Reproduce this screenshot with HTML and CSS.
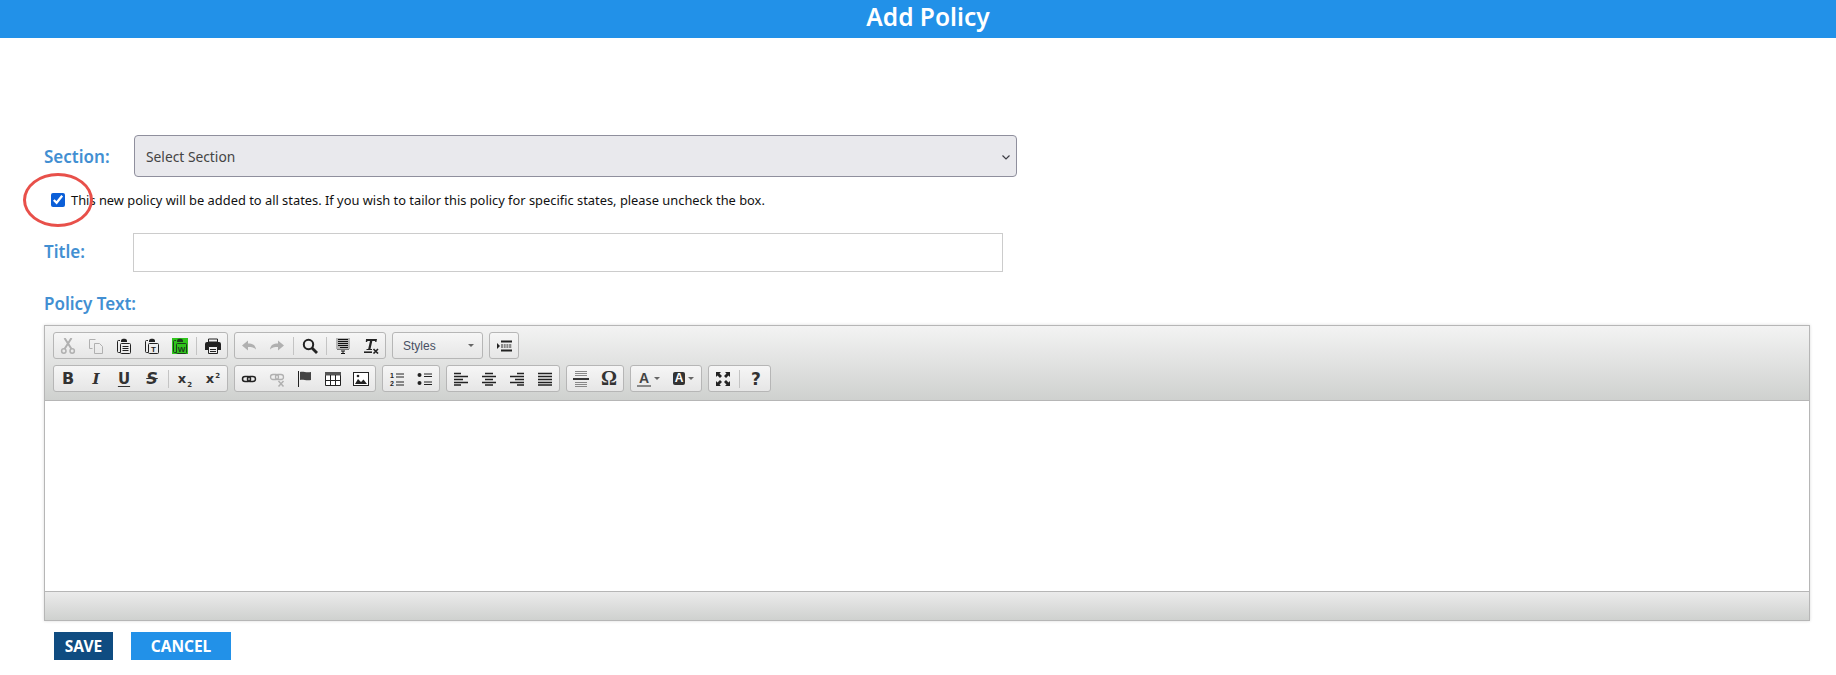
FILE: index.html
```html
<!DOCTYPE html>
<html lang="en">
<head>
<meta charset="utf-8">
<title>Add Policy</title>
<link rel="stylesheet" href="styles.css">
</head>
<body>
<svg class="defs" width="0" height="0">
  <defs>
    <symbol id="i-cut" viewBox="0 0 16 16"><path d="M4.500 0l7 11M11.500 0l-7 11" fill="none" stroke="currentColor" stroke-width="2"/><circle cx="3.800" cy="13" r="2.200" fill="none" stroke="currentColor" stroke-width="1.500"/><circle cx="12.200" cy="13" r="2.200" fill="none" stroke="currentColor" stroke-width="1.500"/></symbol>
    <symbol id="i-copy" viewBox="0 0 16 16"><path d="M7.500 1.500h-6v9h3M6.500 5.500h5l3 3v7h-8z" fill="none" stroke="currentColor"/></symbol>
    <symbol id="i-paste" viewBox="0 0 16 16"><path d="M4 2.500H2.500a1 1 0 0 0-1 1v10a1 1 0 0 0 1 1H4" fill="none" stroke="currentColor"/><path d="M5 2.500C5 .3 11 .3 11 2.500V4H5z" fill="currentColor"/><rect x="4.500" y="5.500" width="10" height="10" rx="1" fill="none" stroke="currentColor"/><path d="M6.500 8.500h6M6.500 10.500h6M6.500 12.500h6" stroke="currentColor"/></symbol>
    <symbol id="i-ptext" viewBox="0 0 16 16"><path d="M4 2.500H2.500a1 1 0 0 0-1 1v10a1 1 0 0 0 1 1H4" fill="none" stroke="currentColor"/><path d="M5 2.500C5 .3 11 .3 11 2.500V4H5z" fill="currentColor"/><rect x="4.500" y="5.500" width="10" height="10" rx="1" fill="none" stroke="currentColor"/><text x="9.500" y="13.500" text-anchor="middle" class="ico-letter">T</text></symbol>
    <symbol id="i-pword" viewBox="0 0 16 16"><path d="M4 2.500H2.500a1 1 0 0 0-1 1v10a1 1 0 0 0 1 1H4" fill="none" stroke="currentColor"/><path d="M5 2.500C5 .3 11 .3 11 2.500V4H5z" fill="currentColor"/><rect x="4.500" y="5.500" width="10" height="10" rx="1" fill="none" stroke="currentColor"/><text x="9.500" y="13.500" text-anchor="middle" class="ico-letter">W</text></symbol>
    <symbol id="i-print" viewBox="0 0 16 16"><path d="M3.500 1h9v3h-9z" fill="none" stroke="currentColor"/><path d="M2 4h12a2 2 0 0 1 2 2v6h-3V9H3v3H0V6a2 2 0 0 1 2-2z" fill="currentColor"/><path d="M3.500 8.500h9v7h-9z" fill="#eee" stroke="currentColor"/><path d="M5 11.500h6M5 13.500h6" stroke="currentColor"/></symbol>
    <symbol id="i-undo" viewBox="0 0 16 16"><path d="M1 7.500l6-5v3c4.500 0 7.500 1.500 8 6-2-2-4-2.500-8-2.500v3.500z" fill="currentColor"/></symbol>
    <symbol id="i-redo" viewBox="0 0 16 16"><path d="M15 7.500l-6-5v3c-4.500 0-7.500 1.500-8 6 2-2 4-2.500 8-2.500v3.500z" fill="currentColor"/></symbol>
    <symbol id="i-find" viewBox="0 0 16 16"><circle cx="6.500" cy="6.500" r="4.700" fill="none" stroke="currentColor" stroke-width="2"/><path d="M10 10l5 5" stroke="currentColor" stroke-width="2.800"/></symbol>
    <symbol id="i-select" viewBox="0 0 16 16"><rect x="1" y="0" width="14" height="11" fill="#b4b4b4"/><path d="M3 1.500h10M3 3.500h10M3 5.500h10M3 7.500h10M5 9.500h8" stroke="#111"/><path d="M2 11.500h12" stroke="#777"/><path d="M6 13h4M8 13v2.500M6 15.500h4" stroke="#111"/></symbol>
    <symbol id="i-remove" viewBox="0 0 16 16"><path d="M3 1h11l-.6 3h-1L12 3H9.300L7.500 11H9v1H3.500v-1h1.700L7 3H4.700l-.9 1h-1z" fill="currentColor"/><path d="M1 14.200h8" stroke="currentColor" stroke-width="1.600"/><path d="M10.500 11l4.500 4.500M15 11l-4.500 4.500" stroke="currentColor" stroke-width="1.600"/></symbol>
    <symbol id="i-indent" viewBox="0 0 16 16"><path d="M1 5l3 3-3 3z" fill="currentColor"/><path d="M5 2.500h11v2H5zM5 11.500h11v2H5z" fill="currentColor"/><path d="M5 7h11M5 9h11" stroke="currentColor" stroke-dasharray="2 .7"/></symbol>
    <symbol id="i-link" viewBox="0 0 16 16"><rect x="1.500" y="5.500" width="8" height="5" rx="2.500" fill="none" stroke="currentColor" stroke-width="1.500"/><rect x="6.500" y="5.500" width="8" height="5" rx="2.500" fill="none" stroke="currentColor" stroke-width="1.500"/></symbol>
    <symbol id="i-unlink" viewBox="0 0 16 16"><rect x="1.500" y="3.500" width="8" height="5" rx="2.500" fill="none" stroke="currentColor" stroke-width="1.300"/><rect x="6.500" y="3.500" width="8" height="5" rx="2.500" fill="none" stroke="currentColor" stroke-width="1.300"/><path d="M9.500 10l5 5.500M14.500 10l-5 5.500" stroke="currentColor" stroke-width="1.500"/></symbol>
    <symbol id="i-anchor" viewBox="0 0 16 16"><path d="M1.500 0v16" stroke="#222"/><path d="M3 1c3-1 6 1 11 0v8c-5 1-8-1-11 0z" fill="#444"/></symbol>
    <symbol id="i-table" viewBox="0 0 16 16"><path d="M.5 1.500h15v13H.5z" fill="#fff" stroke="currentColor"/><path d="M0 1h16v3.500H0z" fill="#555"/><path d="M.5 9.500h15M5.500 4v11M10.500 4v11" stroke="currentColor" fill="none"/></symbol>
    <symbol id="i-image" viewBox="0 0 16 16"><rect x=".5" y="1.500" width="15" height="13" fill="#fff" stroke="currentColor"/><path d="M2 13l3-5 3 3 2.500-2.500L14 13z" fill="currentColor"/><circle cx="5" cy="5" r="1.300" fill="currentColor"/></symbol>
    <symbol id="i-ol" viewBox="0 0 16 16"><path d="M7 3h8M7 6h8M7 11h8M7 14h8" stroke="currentColor"/><text x="1" y="7" class="ico-num">1</text><text x="1" y="15" class="ico-num">2</text></symbol>
    <symbol id="i-ul" viewBox="0 0 16 16"><circle cx="2.500" cy="4" r="2" fill="currentColor"/><circle cx="2.500" cy="12" r="2" fill="currentColor"/><path d="M7 3h8M7 5.500h8M7 11h8M7 13.500h8" stroke="currentColor"/></symbol>
    <symbol id="i-left" viewBox="0 0 16 16"><path d="M1 2.500h7M1 5.500h14M1 8.500h9M1 11.500h14M1 14h7" stroke="currentColor" stroke-width="1.400"/></symbol>
    <symbol id="i-center" viewBox="0 0 16 16"><path d="M4 2.500h8M1 5.500h14M4 8.500h8M1 11.500h14M4 14h8" stroke="currentColor" stroke-width="1.400"/></symbol>
    <symbol id="i-right" viewBox="0 0 16 16"><path d="M8 2.500h7M1 5.500h14M6 8.500h9M1 11.500h14M8 14h7" stroke="currentColor" stroke-width="1.400"/></symbol>
    <symbol id="i-justify" viewBox="0 0 16 16"><path d="M1 2.500h14M1 5.500h14M1 8.500h14M1 11.500h14M1 14h14" stroke="currentColor" stroke-width="1.500"/></symbol>
    <symbol id="i-hr" viewBox="0 0 16 16"><path d="M2 .5h12M2 2.500h12M2 4.500h12M2 11.500h12M2 13.500h12M2 15.500h12" stroke="#888"/><path d="M0 8h16" stroke="currentColor" stroke-width="1.800"/></symbol>
    <symbol id="i-max" viewBox="0 0 16 16"><path d="M1 1h5L4.500 2.500 7 5 5 7 2.500 4.500 1 6zM15 1v5l-1.500-1.500L11 7 9 5l2.500-2.500L10 1zM1 15v-5l1.500 1.500L5 9l2 2-2.500 2.500L6 15zM15 15h-5l1.500-1.500L9 11l2-2 2.500 2.500L15 10z" fill="currentColor"/></symbol>
  </defs>
</svg>

<header class="page-head">Add Policy</header>

<form class="form">
  <div class="row row-section">
    <label class="lbl lbl-section" for="section">Section:</label>
    <div class="select-wrap">
      <select id="section" class="select"><option>Select Section</option></select>
      <svg class="chevron" viewBox="0 0 8 5"><path d="M.5.500L4 4 7.500.5" fill="none" stroke="#3d3d45" stroke-width="1.200"/></svg>
    </div>
  </div>

  <div class="row row-check">
    <input type="checkbox" id="all" class="check" checked>
    <label for="all" class="check-text">This new policy will be added to all states. If you wish to tailor this policy for specific states, please uncheck the box.</label>
    <span class="ring"></span>
  </div>

  <div class="row row-title">
    <label class="lbl lbl-title" for="title">Title:</label>
    <input id="title" class="text-input" type="text">
  </div>

  <div class="lbl lbl-policy">Policy Text:</div>

  <div class="editor">
    <div class="toolbar">
      <div class="tb-row">
        <div class="group">
          <span class="btn off"><svg class="ico"><use href="#i-cut"/></svg></span>
          <span class="btn off"><svg class="ico"><use href="#i-copy"/></svg></span>
          <span class="btn"><svg class="ico"><use href="#i-paste"/></svg></span>
          <span class="btn"><svg class="ico"><use href="#i-ptext"/></svg></span>
          <span class="btn"><svg class="ico ico-green"><use href="#i-pword"/></svg></span>
          <i class="sep"></i>
          <span class="btn"><svg class="ico"><use href="#i-print"/></svg></span>
        </div>
        <div class="group">
          <span class="btn off"><svg class="ico"><use href="#i-undo"/></svg></span>
          <span class="btn off"><svg class="ico"><use href="#i-redo"/></svg></span>
          <i class="sep"></i>
          <span class="btn"><svg class="ico"><use href="#i-find"/></svg></span>
          <i class="sep"></i>
          <span class="btn"><svg class="ico"><use href="#i-select"/></svg></span>
          <span class="btn"><svg class="ico"><use href="#i-remove"/></svg></span>
        </div>
        <div class="group combo"><span class="combo-text">Styles</span><i class="caret"></i></div>
        <div class="group"><span class="btn"><svg class="ico"><use href="#i-indent"/></svg></span></div>
      </div>
      <div class="tb-row">
        <div class="group">
          <span class="btn glyph g-b">B</span>
          <span class="btn glyph g-i">I</span>
          <span class="btn glyph g-u">U</span>
          <span class="btn glyph g-s">S</span>
          <i class="sep"></i>
          <span class="btn glyph g-x"><span>x<sub class="g-sub">2</sub></span></span>
          <span class="btn glyph g-x"><span>x<sup class="g-sup">2</sup></span></span>
        </div>
        <div class="group">
          <span class="btn"><svg class="ico"><use href="#i-link"/></svg></span>
          <span class="btn off"><svg class="ico"><use href="#i-unlink"/></svg></span>
          <span class="btn"><svg class="ico"><use href="#i-anchor"/></svg></span>
          <span class="btn"><svg class="ico"><use href="#i-table"/></svg></span>
          <span class="btn"><svg class="ico"><use href="#i-image"/></svg></span>
        </div>
        <div class="group">
          <span class="btn"><svg class="ico"><use href="#i-ol"/></svg></span>
          <span class="btn"><svg class="ico"><use href="#i-ul"/></svg></span>
        </div>
        <div class="group">
          <span class="btn"><svg class="ico"><use href="#i-left"/></svg></span>
          <span class="btn"><svg class="ico"><use href="#i-center"/></svg></span>
          <span class="btn"><svg class="ico"><use href="#i-right"/></svg></span>
          <span class="btn"><svg class="ico"><use href="#i-justify"/></svg></span>
        </div>
        <div class="group">
          <span class="btn"><svg class="ico"><use href="#i-hr"/></svg></span>
          <span class="btn glyph g-omega">Ω</span>
        </div>
        <div class="group">
          <span class="btn btn-wide"><span class="g-fore">A</span><i class="caret"></i></span>
          <span class="btn btn-wide"><span class="g-back">A</span><i class="caret"></i></span>
        </div>
        <div class="group">
          <span class="btn"><svg class="ico"><use href="#i-max"/></svg></span>
          <i class="sep"></i>
          <span class="btn glyph g-help">?</span>
        </div>
      </div>
    </div>
    <div class="editor-body"></div>
    <div class="editor-foot"></div>
  </div>

  <div class="actions">
    <button type="button" class="action action-save">SAVE</button>
    <button type="button" class="action action-cancel">CANCEL</button>
  </div>
</form>
</body>
</html>
```
FILE: styles.css
```css
* { box-sizing: border-box; }
html, body { margin: 0; padding: 0; background: #fff; }
body { font-family: "Noto Sans", "Open Sans", sans-serif; overflow: hidden; height: 675px; }
.defs { position: absolute; }

.page-head {
  height: 38px;
  line-height: 34px;
  padding-left: 20px;
  background: #2291e8;
  color: #fff;
  font-size: 24.500px;
  font-weight: 600;
  text-align: center;
}

.form { padding: 97px 26px 0 44px; }
.row { display: flex; align-items: center; }
.lbl { color: #428fd2; font-size: 17px; font-weight: 600; }
.lbl-section { width: 90px; flex: none; }
.lbl-title { width: 89px; flex: none; position: relative; top: -1px; }
.lbl-policy { margin-top: 21px; height: 22px; line-height: 22px; }

.select-wrap { position: relative; width: 883px; height: 42px; }
.select {
  display: block;
  width: 100%;
  height: 100%;
  padding: 0 0 0 11px;
  appearance: none;
  background-color: #e9e9ed;
  border: 1px solid #8f8f9d;
  border-radius: 4px;
  color: #444;
  font-family: inherit;
  font-size: 13.800px;
}
.chevron { position: absolute; right: 7px; top: 20px; width: 8px; height: 5px; }

.row-check { margin-top: 16px; padding-left: 7px; height: 14px; position: relative; }
.check { width: 14px; height: 14px; margin: 0 6px 0 0; accent-color: #0b5fd8; flex: none; }
.check-text { font-size: 12.870px; color: #111; white-space: nowrap; }
.ring {
  position: absolute;
  left: -21px;
  top: -20px;
  width: 70px;
  height: 54px;
  border: 3px solid #e8504a;
  border-radius: 50%;
}

.row-title { margin-top: 26px; }
.text-input { width: 870px; height: 39px; border: 1px solid #ccc; background: #fff; }

.editor {
  margin-top: 10px;
  height: 296px;
  display: flex;
  flex-direction: column;
  border: 1px solid #b6b6b6;
  box-shadow: 0 0 3px rgba(0, 0, 0, .15);
}
.toolbar {
  height: 75px;
  flex: none;
  padding: 6px 8px 0;
  display: flex;
  flex-direction: column;
  gap: 6px;
  background: linear-gradient(#f3f3f3, #cfd1cf);
  border-bottom: 1px solid #b6b6b6;
}
.tb-row { display: flex; gap: 6px; height: 27px; }
.group {
  display: flex;
  align-items: center;
  height: 27px;
  border: 1px solid #b6b6b6;
  border-radius: 3px;
  background: linear-gradient(#f6f6f6, #e6e6e6);
}
.btn {
  width: 28px;
  height: 25px;
  display: flex;
  align-items: center;
  justify-content: center;
  color: #222;
}
.btn-wide { width: 35px; gap: 3px; }
.off { color: #b0b0b0; }
.ico { width: 16px; height: 16px; display: block; }
.ico-green { background: #2fc41c; color: #1d3d1d; }
.ico-num { font: 700 7px "Liberation Sans", sans-serif; fill: currentColor; }
.ico-letter { font: 700 8px "Liberation Sans", sans-serif; fill: currentColor; }
.sep { width: 1px; height: 18px; margin: 0 2px; background: #c4c4c4; flex: none; }

.combo { width: 91px; padding: 0 8px 0 10px; justify-content: space-between; }
.combo-text { font: 12px "Liberation Sans", sans-serif; color: #484f63; }
.caret { width: 0; height: 0; border: 3px solid transparent; border-top-color: #666; border-bottom: 0; flex: none; }

.glyph { font-family: "DejaVu Sans", sans-serif; font-weight: 700; color: #333; }
.g-b { font-size: 16px; }
.g-i { font-family: "DejaVu Serif", serif; font-style: italic; font-size: 15px; }
.g-u { font-size: 15px; text-decoration: underline; text-underline-offset: 2px; }
.g-s { font-size: 16px; font-style: italic; text-decoration: line-through; }
.g-x { font-size: 13px; line-height: 1; }
.g-sub, .g-sup { font-size: 7px; line-height: 0; margin-left: 1px; }
.g-omega { font-family: "Liberation Serif", serif; font-size: 20px; }
.g-help { font-size: 17px; }
.g-fore {
  font: 700 14px/14px "Liberation Sans", sans-serif;
  color: #444;
  border-bottom: 2px solid #888;
  padding: 0 2px;
}
.g-back {
  font: 700 12px/13px "Liberation Sans", sans-serif;
  color: #fff;
  background: #333;
  border-radius: 2px;
  padding: 0 2px;
}

.editor-body { flex: 1; background: #fff; }
.editor-foot {
  height: 29px;
  flex: none;
  background: linear-gradient(#ebebeb, #cfd1cf);
  border-top: 1px solid #b6b6b6;
}

.actions { margin-top: 11px; padding-left: 10px; display: flex; gap: 18px; }
.action {
  height: 28px;
  border: 0;
  padding: 0;
  color: #fff;
  font-family: "Noto Sans", sans-serif;
  font-size: 15.500px;
  font-weight: 700;
}
.action-save { width: 59px; background: #0f4c81; }
.action-cancel { width: 100px; background: #2291e8; }
```
